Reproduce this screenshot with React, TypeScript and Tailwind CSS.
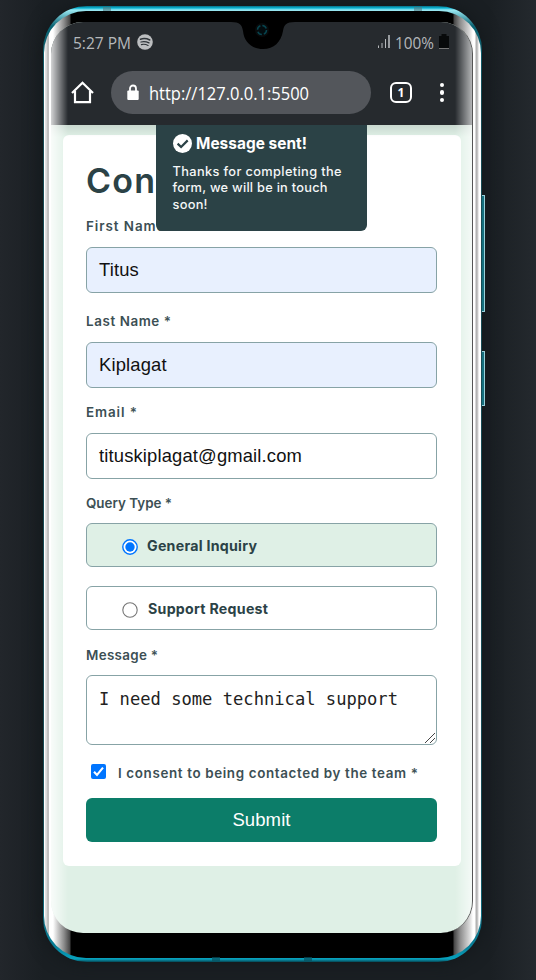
import React from "react";

function Label({ text, width }: { text: string; width: string }) {
  return (
    <label className="block h-5 font-['Inter',sans-serif] font-semibold whitespace-nowrap text-[#3c4f54]">
      <svg className="block h-5 overflow-visible" width={width} height="20" aria-label={text}>
        <text x="0" y="15" fontSize="13.4" fill="currentColor" textLength={width} lengthAdjust="spacing">{text}</text>
      </svg>
    </label>
  );
}

function Field({ label, width, value, filled }: { label: string; width: string; value: string; filled?: boolean }) {
  return (
    <div className="flex flex-col gap-[11px]">
      <Label text={label} width={width} />
      <div className={`flex h-[46px] items-center rounded-[6px] border border-[#87a3a6] px-3 pb-px font-['Liberation_Sans',Arial,sans-serif] text-[18.4px] text-[#111] ${filled ? "bg-[#e8f0fe]" : "bg-white"}`}>
        <span className="tracking-[0.15px]">{value}</span>
      </div>
    </div>
  );
}

function StatusBar() {
  return (
    <div className="flex h-[41px] items-center px-[22px] font-['Open_Sans','Noto_Sans',sans-serif] text-[#b5b8bb]">
      <svg width="59" height="20" className="block overflow-visible">
        <text x="0" y="15.5" fontSize="15.5" fill="currentColor" textLength="58" lengthAdjust="spacingAndGlyphs">5:27 PM</text>
      </svg>
      <svg width="16" height="16" viewBox="0 0 16 16" className="mb-0.5 ml-[5px]">
        <circle cx="8" cy="8" r="7.8" fill="#bcbec0" />
        <g fill="none" stroke="#30353a" strokeLinecap="round">
          <path d="M3.5 5.2C6.5 4.2 10 4.6 12.8 6" strokeWidth="1.5" />
          <path d="M4 8C6.7 7.2 9.4 7.6 12 8.9" strokeWidth="1.3" />
          <path d="M4.4 10.6c2.3-.6 4.5-.3 6.7.9" strokeWidth="1.1" />
        </g>
      </svg>
      <svg width="13" height="14" viewBox="0 0 13 14" className="mb-0.5 ml-auto">
        <path d="M.5 10.5V13M4 8v5M7.5 4v9" stroke="#b5b8bb" strokeWidth="1" />
        <path d="M11 0v13" stroke="#b5b8bb" strokeWidth="1.6" />
      </svg>
      <svg width="40" height="20" className="ml-[4px] block overflow-visible">
        <text x="0" y="15.5" fontSize="15.5" fill="currentColor" textLength="39" lengthAdjust="spacingAndGlyphs">100%</text>
      </svg>
      <svg width="10" height="15" viewBox="0 0 10 15" className="mr-px mb-0.5 ml-[4px]">
        <path d="M2.5 0h5v2H10v12H0V2h2.5z" fill="#080a0b" />
        <path d="M0 14.5h10" stroke="#777" />
      </svg>
    </div>
  );
}

function BrowserBar() {
  return (
    <div className="flex h-[62px] items-center pt-px pr-[28px] pb-[4px] pl-[20px]">
      <svg width="23" height="23" viewBox="0 0 23 23" fill="none" stroke="white" strokeWidth="2.2">
        <path d="M1 12 11.5 1.7 22 12M4 10v11.2h15V10" />
      </svg>
      <div className="ml-[17px] flex h-[43px] w-[260px] items-center rounded-full bg-[#53565b] pl-4 text-white">
        <svg width="12" height="17" viewBox="0 0 12 17">
          <path d="M3 7V4.5a3 3 0 0 1 6 0V7" fill="none" stroke="white" strokeWidth="1.8" />
          <rect x=".3" y="6.5" width="11.4" height="9.5" rx="1" fill="white" />
        </svg>
        <svg width="160" height="24" className="ml-[10px] block overflow-visible font-['Open_Sans','Noto_Sans',sans-serif]">
          <text x="0" y="19" fontSize="17.5" fill="white" textLength="160" lengthAdjust="spacingAndGlyphs">http://127.0.0.1:5500</text>
        </svg>
      </div>
      <div className="ml-[19px] flex h-[21px] w-[22px] items-center justify-center rounded-[6px] border-2 border-white font-['Open_Sans',sans-serif] text-[12px] font-bold text-white">
        1
      </div>
      <div className="ml-auto flex flex-col gap-[3px]">
        <i className="h-[4.5px] w-[4.5px] rounded-full bg-white" />
        <i className="h-[4.5px] w-[4.5px] rounded-full bg-white" />
        <i className="h-[4.5px] w-[4.5px] rounded-full bg-white" />
      </div>
    </div>
  );
}

function Toast() {
  return (
    <div className="absolute top-0 left-[105px] flex h-[106px] w-[211px] flex-col gap-[9px] rounded-b-[6px] bg-[#2b4246] px-[17px] pt-[8px] font-['Inter',sans-serif] text-white">
      <div className="flex items-center gap-[4px]">
        <svg width="19" height="19" viewBox="0 0 19 19">
          <circle cx="9.5" cy="9.5" r="9.5" fill="white" />
          <path d="m4.6 9.6 3.5 3.4 6.6-6.6" fill="none" stroke="#2b4246" strokeWidth="2.2" />
        </svg>
        <svg width="112" height="20" className="block overflow-visible">
          <text x="0" y="16" fontSize="15.4" fontWeight="700" fill="white" textLength="111" lengthAdjust="spacing">Message sent!</text>
        </svg>
      </div>
      <svg width="178" height="52" className="block overflow-visible" fontSize="12.8" fontWeight="500" fill="#f5f7f7">
        <text x="-0.5" y="14" textLength="169" lengthAdjust="spacing">Thanks for completing the</text>
        <text x="-0.5" y="30" textLength="155" lengthAdjust="spacing">form, we will be in touch</text>
        <text x="-0.5" y="47" textLength="35" lengthAdjust="spacing">soon!</text>
      </svg>
    </div>
  );
}

function Option({ text, width, checked }: { text: string; width: string; checked?: boolean }) {
  return (
    <div className={`flex h-[44px] items-center rounded-[6px] border border-[#87a3a6] pl-[35px] ${checked ? "gap-[9px] bg-[#dff0e6]" : "gap-[10px] bg-white"}`}>
      <svg width="16" height="16" viewBox="0 0 16 16" className="mt-[3px]">
        <circle cx="8" cy="8" r="7.2" fill="white" stroke={checked ? "#0075ff" : "#767676"} strokeWidth={checked ? 1.4 : 1.1} />
        {checked && <circle cx="8" cy="8" r="4.7" fill="#0075ff" />}
      </svg>
      <svg width="130" height="20" className="block overflow-visible font-['Inter',sans-serif]">
        <text x="0" y="15.5" fontSize="14.2" fontWeight="700" fill="#2b4246" textLength={width} lengthAdjust="spacing">{text}</text>
      </svg>
    </div>
  );
}

function ContactForm() {
  return (
    <form className="flex h-[731px] w-[398px] flex-col gap-[10px] rounded-[6px] bg-white pt-[22px] pr-[24px] pl-[23px]">
      <h1 className="h-[49px] font-['Inter',sans-serif] text-[34px] leading-[48px] font-semibold tracking-[1.2px] text-[#2b4246]">Contact Us</h1>
      <div className="flex flex-col gap-[14px]">
        <div className="flex flex-col gap-[18px]">
          <Field label="First Name *" width="91" value="Titus" filled />
          <Field label="Last Name *" width="85" value="Kiplagat" filled />
        </div>
        <Field label="Email *" width="51" value="tituskiplagat@gmail.com" />
        <div className="flex flex-col gap-[10px]">
          <Label text="Query Type *" width="86" />
          <div className="flex flex-col gap-[19px]">
            <Option text="General Inquiry" width="110" checked />
            <Option text="Support Request" width="120" />
          </div>
        </div>
        <div className="flex flex-col gap-[10px] pt-px">
          <Label text="Message *" width="72" />
          <div className="flex h-[70px] justify-between rounded-[6px] border border-[#87a3a6] pl-3 text-black">
            <svg width="300" height="40" className="block overflow-visible font-['DejaVu_Sans_Mono',monospace]">
              <text x="0" y="29" fontSize="16.8" fill="#222" textLength="299" lengthAdjust="spacingAndGlyphs">I need some technical support</text>
            </svg>
            <svg width="12" height="12" viewBox="0 0 12 12" className="self-end" stroke="#444">
              <path d="M1 11 11 1M6 11l5-5" />
            </svg>
          </div>
        </div>
      </div>
      <div className="flex flex-col gap-[14px] pt-[7px]">
        <div className="flex h-[22px] items-center gap-[12px] pl-[5px]">
          <svg width="15" height="15" viewBox="0 0 15 15" className="mb-[3px]">
            <rect width="15" height="15" rx="2" fill="#0075ff" />
            <path d="m3 7.7 3 3.2 6-7.2" fill="none" stroke="white" strokeWidth="2.1" />
          </svg>
          <Label text="I consent to being contacted by the team *" width="300" />
        </div>
        <button type="button" className="h-[44px] w-full rounded-[6px] bg-[#0c7d69] text-center font-['Liberation_Sans',Arial,sans-serif] text-[18.5px] tracking-[0.1px] text-white">
          Submit
        </button>
      </div>
    </form>
  );
}

export default function App() {
  return (
    <main className="relative h-[980px] w-[536px] overflow-hidden bg-[linear-gradient(90deg,#22262b_0,#1a1f23_43px,#1a1f23_490px,#24292e_536px)] pt-[6px] pl-[43px]">
      <div className="relative h-[956px] w-[439px] overflow-hidden rounded-[44px] bg-[linear-gradient(180deg,#0a6d82_0,#08b4d4_2px,#9be9f3_4px,#0a6474_20px,#174b55_100px,#174b55_850px,#087e97_940px,#07a1bd_953px,#064653_956px)] pt-[5px] pr-px pb-[4px] pl-px shadow-[0_0_18px_#12171a]">
        <div className="h-[947px] w-[437px] overflow-hidden rounded-[42px] bg-[linear-gradient(90deg,#fff_0,#fff_0.5px,#d5d5d5_1px,#efefef_2px,#c0c0c0_3px,#c0c0c0_5px,#fff_5.5px,#fff_9px,#c8c8c8_14px,#8b8b8b_20px,#444_26px,#000_27px,#000_409px,#444_410px,#8b8b8b_416px,#ddd_426px,#fff_429px,#fff_431px,#b0b0b0_432px,#b5b5b5_433px,#d5d5d5_434px,#fff_435px,#fff_437px)] pt-[11px] pl-[7px]">
          <div className="relative h-[911px] w-[422px] overflow-hidden rounded-[32px] border-r border-[#555] bg-[#dff0e6]">
            <header className="h-[103px] bg-[#262a2e]">
              <StatusBar />
              <BrowserBar />
            </header>
            <section className="relative px-3 pt-[10px]">
              <ContactForm />
              <i className="absolute inset-x-0 top-0 h-3 bg-linear-to-b from-black/10 to-transparent" />
              <Toast />
            </section>
            <svg className="absolute top-0 left-[180px]" width="64" height="28" viewBox="0 0 64 28">
              <path d="M0 0h64c-9 0-11 3-12 9-2 11-9 18-20 18s-19-7-20-18C11 3 9 0 0 0z" fill="#000" />
              <circle cx="31" cy="8" r="7" fill="#080a0b" />
              <circle cx="31" cy="8" r="4.5" fill="#020b0e" stroke="#07444e" strokeWidth="1.5" strokeDasharray="5 2" />
            </svg>
            <i className="absolute inset-y-0 left-0 w-[17px] bg-linear-to-r from-white/80 to-transparent" />
            <i className="absolute inset-y-0 right-0 w-[17px] bg-linear-to-l from-white/65 to-transparent" />
          </div>
        </div>
      </div>
      <i className="absolute top-[195px] left-[482px] h-[117px] w-[3px] border border-l-0 border-[#9bd0da] bg-[#17717f]" />
      <i className="absolute top-[351px] left-[482px] h-[55px] w-[3px] border border-l-0 border-[#9bd0da] bg-[#17717f]" />
      <i className="absolute top-[7px] left-[103px] h-[4px] w-[8px] bg-[#527a81]/60" />
      <i className="absolute top-[7px] left-[414px] h-[4px] w-[8px] bg-[#527a81]/60" />
      <i className="absolute top-[957px] left-[212px] h-[4px] w-[8px] bg-[#07505e]/70" />
      <i className="absolute top-[957px] left-[304px] h-[4px] w-[8px] bg-[#07505e]/70" />
    </main>
  );
}
